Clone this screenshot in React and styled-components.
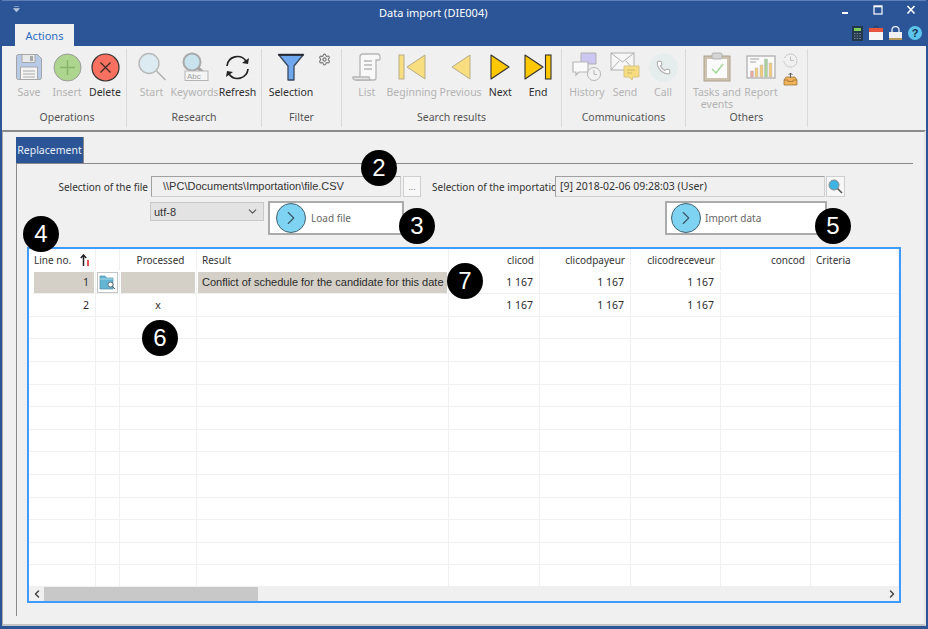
import React from 'react';
import styled, { createGlobalStyle } from 'styled-components';
import { ChevronDown, ChevronLeft, ChevronRight, Settings, Phone } from 'lucide-react';

const GlobalStyle = createGlobalStyle`
  html, body {
    margin: 0;
    padding: 0;
    background: #f0f0f0;
  }
  * {
    box-sizing: border-box;
  }
`;

const UI_FONT = '"Noto Sans", "Open Sans", sans-serif';
const DATA_FONT = '"Liberation Sans", Arial, sans-serif';

const Window = styled.div`
  position: relative;
  width: 928px;
  height: 629px;
  display: flex;
  flex-direction: column;
  overflow: hidden;
  background: #f0f0f0;
  border-left: 2px solid #2b5597;
  border-right: 2px solid #2b5597;
  border-bottom: 3px solid #2b5597;
  font-family: ${UI_FONT};
`;

const TitleBar = styled.div`
  height: 24px;
  display: flex;
  align-items: center;
  background: #2b5597;
  color: #fff;
  font-size: 11px;
  border-top: 1px solid #5d7fb5;
`;

const QuickAccess = styled.div`
  width: 377px;
  padding-left: 11px;
  display: flex;
  margin-top: -6px;
`;

const WindowControls = styled.div`
  margin-left: auto;
  padding-right: 9px;
  display: flex;
  align-items: center;
  gap: 21px;
  margin-top: -6px;
`;

const TabStrip = styled.div`
  height: 22px;
  display: flex;
  align-items: flex-end;
  justify-content: space-between;
  background: #2b5597;
  padding-left: 13px;
`;

const RibbonTab = styled.div`
  width: 59px;
  height: 22px;
  background: #f0f0f0;
  color: #2b6cc4;
  font-size: 11px;
  display: flex;
  align-items: center;
  justify-content: center;
`;

const TopIcons = styled.div`
  display: flex;
  align-items: center;
  gap: 6px;
  padding-right: 4px;
  height: 22px;
  margin-bottom: 2px;
`;

const Ribbon = styled.div`
  height: 84px;
  display: flex;
  padding: 3px 0 3px 6px;
`;

const RibbonGroup = styled.div`
  width: ${({ $width }) => $width}px;
  display: flex;
  flex-direction: column;
  border-right: 1px solid #d9d9d9;
  padding-left: ${({ $pad }) => $pad || 0}px;
`;

const GroupItems = styled.div`
  flex: 1;
  display: flex;
  align-items: flex-start;
`;

const GroupLabel = styled.div`
  height: 17px;
  text-align: center;
  font-size: 10.5px;
  line-height: 14px;
  color: #555;
  margin-left: ${({ $pad }) => ($pad ? -$pad : 0)}px;
`;

const RibbonButton = styled.div`
  width: ${({ $width }) => $width || 38}px;
  padding-top: 3px;
  display: flex;
  flex-direction: column;
  align-items: center;
  text-align: center;
  font-size: 10.5px;
  line-height: 12px;
  color: ${({ $muted }) => ($muted ? '#b3b3b3' : '#2f2f2f')};
`;

const IconSlot = styled.div`
  height: 30px;
  margin-bottom: 4px;
  display: flex;
  align-items: center;
  justify-content: center;
`;

const SideIcons = styled.div`
  width: ${({ $width }) => $width}px;
  padding-top: 4px;
  display: flex;
  flex-direction: column;
  align-items: center;
  gap: 5px;
`;

const Body = styled.div`
  flex: 1;
  min-height: 0;
  display: flex;
  flex-direction: column;
  padding: 5px 0 8px 13px;
  border-top: 2px solid #8a8a8a;
  border-left: 1px solid #a8a8a8;
  border-right: 2px solid #e4e4e4;
  border-bottom: 2px solid #c4c4c4;
`;

const PaneTab = styled.div`
  width: 68px;
  height: 26px;
  background: #2b5597;
  color: #e8eef8;
  font-size: 10.5px;
  display: flex;
  align-items: center;
  justify-content: center;
  border-right: 1px solid #8a8a8a;
`;

const Pane = styled.div`
  flex: 1;
  width: 897px;
  border-top: 1px solid #8a8a8a;
  border-left: 1px solid #8a8a8a;
  padding: 12px 0 0 10px;
  display: flex;
  flex-direction: column;
`;

const FormRow = styled.div`
  display: flex;
  align-items: ${({ $align }) => $align || 'center'};
  margin-left: -10px;
  margin-top: ${({ $top }) => $top || 0}px;
`;

const FieldLabel = styled.label`
  width: ${({ $width }) => $width}px;
  margin-left: ${({ $left }) => $left || 0}px;
  margin-right: ${({ $right }) => $right || 3}px;
  text-align: right;
  white-space: nowrap;
  font-size: 10px;
  color: #333;
`;

const ReadonlyField = styled.input`
  width: ${({ $width }) => $width}px;
  height: 21px;
  padding: 0 0 2px ${({ $pad }) => $pad}px;
  background: #f0f0f0;
  border: 1px solid #a0a0a0;
  border-right-color: #cfcfcf;
  border-bottom-color: #cfcfcf;
  outline: none;
  color: #333;
  font-family: ${({ $mono }) => ($mono ? UI_FONT : DATA_FONT)};
  font-size: ${({ $mono }) => ($mono ? 10.5 : 11)}px;
`;

const SmallButton = styled.div`
  width: ${({ $width }) => $width}px;
  height: 21px;
  margin-left: ${({ $left }) => $left}px;
  background: #f7f7f7;
  border: 1px solid #cfcfcf;
  display: flex;
  align-items: center;
  justify-content: center;
  font-size: 9px;
  color: #888;
`;

const EncodingSelect = styled.div`
  width: 114px;
  height: 19px;
  margin-left: 133px;
  margin-top: 1px;
  padding: 0 4px 0 3px;
  background: #e3e3e3;
  border: 1px solid #c8c8c8;
  display: flex;
  align-items: center;
  justify-content: space-between;
  font-family: ${DATA_FONT};
  font-size: 11px;
  color: #333;
`;

const ActionButton = styled.div`
  width: ${({ $width }) => $width}px;
  height: 34px;
  margin-left: ${({ $left }) => $left}px;
  padding-left: ${({ $pad }) => $pad}px;
  background: #fff;
  border: 2px solid #ababab;
  display: flex;
  align-items: center;
  gap: ${({ $gap }) => $gap}px;
  font-size: 10px;
  color: #666;
`;

const ArrowDisc = styled.div`
  width: 30px;
  height: 30px;
  border-radius: 50%;
  background: #7dd3f1;
  border: 1px solid #44606e;
  display: flex;
  align-items: center;
  justify-content: center;
  color: #3c5563;
`;

const DataGrid = styled.div`
  width: 874px;
  height: 356px;
  margin-top: 12px;
  display: flex;
  flex-direction: column;
  background: #fff;
  border: 2px solid #3f9bfb;
`;

const Rows = styled.div`
  flex: 1;
  min-height: 0;
  overflow: hidden;
  display: grid;
  grid-template-columns: 67px 24px 77px 252px 91px 91px 90px 90px 88px;
  grid-auto-rows: 22.6px;
  align-content: start;
`;

const HeaderCell = styled.div`
  height: 22px;
  display: flex;
  align-items: center;
  justify-content: ${({ $align }) => $align || 'flex-start'};
  padding: ${({ $align }) => ($align === 'flex-end' ? '0 5px 0 0' : '0 0 0 5px')};
  border-right: 1px solid #f0f0f0;
  font-size: 10px;
  color: #333;
  white-space: nowrap;
`;

const Cell = styled.div`
  display: flex;
  align-items: center;
  justify-content: ${({ $align }) => $align || 'flex-start'};
  padding: ${({ $align }) => ($align === 'flex-end' ? '0 6px 0 0' : $align === 'center' ? '0' : '0 0 0 5px')};
  margin-left: ${({ $inset }) => $inset || 0}px;
  background: ${({ $selected }) => ($selected ? '#d4d0c8' : '#fff')};
  border-right: 1px solid #f0f0f0;
  border-bottom: ${({ $last }) => ($last ? 'none' : '1px solid #f0f0f0')};
  box-shadow: ${({ $selected }) => ($selected ? 'inset 1px 0 0 #fff, inset -1px 0 0 #fff' : 'none')};
  font-family: ${({ $data }) => ($data ? DATA_FONT : UI_FONT)};
  font-size: ${({ $data }) => ($data ? 11 : 10.5)}px;
  color: #2a2a2a;
  white-space: nowrap;
`;

const RowButton = styled.div`
  width: 21px;
  height: 21px;
  margin: auto;
  background: #fff;
  border: 1px solid #c4c4c4;
  display: flex;
  align-items: center;
  justify-content: center;
`;

const SortMark = styled.span`
  margin-left: auto;
  margin-right: 5px;
  display: flex;
`;

const ScrollBar = styled.div`
  height: 15px;
  display: flex;
  align-items: center;
  background: #f0f0f0;
  margin-bottom: 0;
  color: #444;
`;

const ScrollArrow = styled.div`
  width: 15px;
  height: 15px;
  display: flex;
  align-items: center;
  justify-content: center;
  margin-left: ${({ $end }) => ($end ? 'auto' : 0)};
`;

const ScrollThumb = styled.div`
  width: 214px;
  height: 14px;
  background: #c8c8c8;
`;

const Badge = styled.div`
  position: absolute;
  left: ${({ $x }) => $x - 20}px;
  top: ${({ $y }) => $y - 18}px;
  width: 36px;
  height: 36px;
  border-radius: 50%;
  background: #000;
  color: #fff;
  font-family: ${DATA_FONT};
  font-size: 24px;
  display: flex;
  align-items: center;
  justify-content: center;
`;

const SaveIcon = () => (
  <svg width="28" height="28" viewBox="0 0 28 28">
    <path d="M1.5 3.5a2 2 0 0 1 2-2h19l4 4v19a2 2 0 0 1-2 2h-21a2 2 0 0 1-2-2z" fill="#b7cbe8" stroke="#a3a3a3" />
    <rect x="7" y="1.5" width="13" height="8" fill="#e9e9e9" stroke="#a8a8a8" />
    <rect x="15" y="3" width="3" height="5" fill="#a8a8a8" />
    <rect x="5.5" y="14" width="17" height="12.5" fill="#f4f4f4" stroke="#a8a8a8" />
    <path d="M8 18h12M8 21h12M8 24h12" stroke="#a8a8a8" />
  </svg>
);

const InsertIcon = () => (
  <svg width="29" height="29" viewBox="0 0 29 29">
    <circle cx="14.5" cy="14.5" r="13.5" fill="#add58f" stroke="#9b9b9b" />
    <path d="M14.5 7v15M7 14.5h15" stroke="#86b56a" strokeWidth="1.5" />
  </svg>
);

const DeleteIcon = () => (
  <svg width="29" height="29" viewBox="0 0 29 29">
    <circle cx="14.5" cy="14.5" r="13.5" fill="#f8705f" stroke="#333" strokeWidth="1.2" />
    <path d="M9.5 9.5l10 10M19.5 9.5l-10 10" stroke="#3a2a28" strokeWidth="1.2" />
  </svg>
);

const StartIcon = () => (
  <svg width="30" height="30" viewBox="0 0 30 30">
    <circle cx="12" cy="11.5" r="10" fill="#dcebf1" stroke="#b8b8b8" strokeWidth="1.4" />
    <path d="M19.5 19l9 9" stroke="#b3b3b3" strokeWidth="1.6" />
  </svg>
);

const KeywordsIcon = () => (
  <svg width="30" height="30" viewBox="0 0 30 30">
    <circle cx="12" cy="10" r="8.5" fill="#c9e3ee" stroke="#a9a9a9" strokeWidth="2" />
    <path d="M18 16l7 6" stroke="#a2a2a2" strokeWidth="3" />
    <rect x="5" y="19" width="23" height="9.5" fill="#f4f4f4" stroke="#b5b5b5" />
    <text x="7" y="27" fontSize="8" fontFamily={DATA_FONT} fill="#a0a0a0">Abc</text>
  </svg>
);

const RefreshIcon = () => (
  <svg width="27" height="27" viewBox="0 0 27 27" fill="none" stroke="#222" strokeWidth="1.7">
    <path d="M3 12a10.5 10.5 0 0 1 19-5" />
    <path d="M24 15a10.5 10.5 0 0 1-19 5" />
    <path d="M23.5 1.5v7h-7" strokeWidth="0" fill="none" />
    <path d="M25 4l-1 6-6-1z" fill="#222" stroke="none" />
    <path d="M2 23l1-6 6 1z" fill="#222" stroke="none" />
  </svg>
);

const FunnelIcon = () => (
  <svg width="28" height="28" viewBox="0 0 28 28">
    <path d="M1.5 1.5h25L17 13v14h-6V13z" fill="#6fa8ee" stroke="#39485c" strokeWidth="1.3" strokeLinejoin="round" />
    <path d="M1.5 2h25" stroke="#222" strokeWidth="1.6" />
  </svg>
);

const ListIcon = () => (
  <svg width="29" height="29" viewBox="0 0 29 29" fill="none" stroke="#b5b5b5" strokeWidth="1.3">
    <path d="M8 24V4a3 3 0 0 1 3-3h15a2.5 2.5 0 0 1 2 2.5V6a1.5 1.5 0 0 1-2 1h-2v18a2 2 0 0 1-2 2H4" fill="#f8f8f8" />
    <path d="M1 24a2.5 2.5 0 0 0 3 3h15a3 3 0 0 1-2-3z" fill="#e4e4e4" />
    <path d="M12 8h8M12 12h8M12 16h8" />
  </svg>
);

const BeginningIcon = () => (
  <svg width="28" height="26" viewBox="0 0 28 26">
    <rect x="1" y="1" width="5" height="24" fill="#f9de80" stroke="#b5ab8a" />
    <path d="M9 13L27 1v24z" fill="#f9de80" stroke="#b5ab8a" strokeLinejoin="round" />
  </svg>
);

const PreviousIcon = () => (
  <svg width="20" height="26" viewBox="0 0 20 26">
    <path d="M1 13L19 1v24z" fill="#f9de80" stroke="#b5ab8a" strokeLinejoin="round" />
  </svg>
);

const NextIcon = () => (
  <svg width="20" height="26" viewBox="0 0 20 26">
    <path d="M19 13L1 1v24z" fill="#ffc800" stroke="#333" strokeWidth="1.1" strokeLinejoin="round" />
  </svg>
);

const EndIcon = () => (
  <svg width="28" height="26" viewBox="0 0 28 26">
    <path d="M19 13L1 1v24z" fill="#ffc800" stroke="#333" strokeWidth="1.1" strokeLinejoin="round" />
    <rect x="21.5" y="1" width="5.5" height="24" fill="#ffc800" stroke="#333" strokeWidth="1.1" />
  </svg>
);

const HistoryIcon = () => (
  <svg width="30" height="30" viewBox="0 0 30 30">
    <path d="M9 1h15v11h-9l-2 2v-2H9z" fill="#ccc6f2" stroke="#b1b1b1" />
    <path d="M1 10h15v10H7l-3 3v-3H1z" fill="#fafafa" stroke="#b5b5b5" strokeWidth="1.2" />
    <circle cx="22" cy="22" r="6.5" fill="#f3f3f3" stroke="#b5b5b5" />
    <path d="M22 18v4.5h3" fill="none" stroke="#b5b5b5" />
  </svg>
);

const SendIcon = () => (
  <svg width="30" height="30" viewBox="0 0 30 30">
    <rect x="1" y="1" width="23" height="17" fill="#f6f6f6" stroke="#b0b0b0" />
    <path d="M1 1l11.5 9L24 1M1 18l8-9M24 18l-8-9" fill="none" stroke="#b0b0b0" />
    <path d="M14 14h15v11h-6l-1 3-3-3h-5z" fill="#f8dc80" stroke="#d6c589" />
    <path d="M17 18h8M17 21h5" stroke="#c9b86f" />
  </svg>
);

const TasksIcon = () => (
  <svg width="28" height="30" viewBox="0 0 28 30">
    <rect x="1" y="4" width="26" height="25" fill="#cfc2ae" stroke="#aaa292" />
    <rect x="4" y="7" width="20" height="19" fill="#fbfbfb" />
    <rect x="9" y="1" width="10" height="6" rx="1.5" fill="#d4d4d4" stroke="#b0b0b0" />
    <path d="M9 17l4 4 7-9" fill="none" stroke="#9ed695" strokeWidth="1.4" />
  </svg>
);

const ReportIcon = () => (
  <svg width="30" height="25" viewBox="0 0 30 25">
    <rect x="1" y="1" width="28" height="22" fill="#fafafa" stroke="#b0b0b0" strokeWidth="1.3" />
    <path d="M4 4h9M4 7h6" stroke="#c0c0c0" strokeWidth="1.4" />
    <rect x="4.5" y="16" width="3" height="6" fill="#e8a6a0" stroke="#b5b5b5" strokeWidth=".4" />
    <rect x="9" y="13" width="3" height="9" fill="#f2cb80" stroke="#b5b5b5" strokeWidth=".4" />
    <rect x="14" y="10" width="3" height="12" fill="#f2cb80" stroke="#b5b5b5" strokeWidth=".4" />
    <rect x="18.5" y="4" width="3" height="18" fill="#a9d29a" stroke="#b5b5b5" strokeWidth=".4" />
    <rect x="23" y="8" width="3" height="14" fill="#f2cb80" stroke="#b5b5b5" strokeWidth=".4" />
  </svg>
);

const SmallClockIcon = () => (
  <svg width="15" height="15" viewBox="0 0 15 15" fill="none" stroke="#bdbdbd">
    <path d="M1.5 5a6.5 6.5 0 1 1-.5 3" strokeDasharray="2 .6" />
    <path d="M7.5 3.5v4h3" />
  </svg>
);

const TrayIcon = () => (
  <svg width="15" height="13" viewBox="0 0 15 13">
    <path d="M1 7l2-3h9l2 3v5H1z" fill="#f2b257" stroke="#8f6a35" strokeWidth=".7" />
    <path d="M7.5 0v5M5.5 2l2-2 2 2" fill="none" stroke="#5f5f5f" />
    <path d="M1 7h4v1.5h5V7h4" fill="none" stroke="#8f6a35" strokeWidth=".7" />
  </svg>
);

const CalculatorIcon = () => (
  <svg width="11" height="15" viewBox="0 0 11 15">
    <rect width="11" height="15" fill="#24384c" />
    <rect x="2" y="2" width="7" height="3" fill="#7fcf5a" />
    <path d="M2 7.5h7M2 10h7M2 12.5h7" stroke="#7d8b99" strokeDasharray="1.5 1.2" />
  </svg>
);

const CalendarIcon = () => (
  <svg width="14" height="14" viewBox="0 0 14 14">
    <rect y="2" width="14" height="4" fill="#e9553f" />
    <rect y="6" width="14" height="8" fill="#f6f6f6" />
    <path d="M5 2a2 2 0 0 1 4 0" fill="none" stroke="#24384c" />
  </svg>
);

const LockIcon = () => (
  <svg width="13" height="14" viewBox="0 0 13 14">
    <path d="M3 7V4a3.5 3.5 0 0 1 7 0v3" fill="none" stroke="#e4e8ee" strokeWidth="1.4" />
    <rect y="6" width="13" height="6" fill="#eef0f2" />
    <rect y="12" width="13" height="2" fill="#b89a5a" />
  </svg>
);

const HelpIcon = () => (
  <svg width="14" height="14" viewBox="0 0 14 14">
    <circle cx="7" cy="7" r="7" fill="#5cc4ec" />
    <text x="7" y="11" textAnchor="middle" fontSize="11" fontWeight="700" fontFamily={DATA_FONT} fill="#17304f">?</text>
  </svg>
);

const QuickIcon = () => (
  <svg width="7" height="7" viewBox="0 0 7 7">
    <path d="M1 .5h5M.5 2.5h6L3.5 6z" fill="#b8c6dc" stroke="#b8c6dc" strokeWidth=".6" />
  </svg>
);

const SearchMiniIcon = () => (
  <svg width="15" height="15" viewBox="0 0 15 15">
    <circle cx="6" cy="6" r="5" fill="#3db4e4" stroke="#8a8a8a" />
    <path d="M9.5 9.5l4.5 4.5" stroke="#555" strokeWidth="1.6" />
  </svg>
);

const FolderSearchIcon = () => (
  <svg width="17" height="16" viewBox="0 0 17 16">
    <path d="M1 2h5l1.500 2H14v11H1z" fill="#64b5d3" stroke="#4f8aa3" strokeWidth=".7" />
    <path d="M1 5h13" stroke="#a5d8ea" />
    <circle cx="11.500" cy="10.500" r="2.500" fill="#fff" stroke="#555" strokeWidth=".8" />
    <path d="M13.300 12.300L16 15" stroke="#555" />
  </svg>
);

const SortIcon = () => (
  <svg width="10" height="12" viewBox="0 0 10 12">
    <path d="M3.500 12V1M.8 4l2.700-3 2.700 3" fill="none" stroke="#222" strokeWidth="1.500" />
    <path d="M8 6v6" stroke="#e01818" strokeWidth="1.500" />
  </svg>
);

const WindowButtons = () => (
  <WindowControls>
    <svg width="12" height="10" viewBox="0 0 12 10"><path d="M3 8h6" stroke="#fff" strokeWidth="2" /></svg>
    <svg width="12" height="10" viewBox="0 0 12 10"><rect x="2" y="1" width="8" height="8" fill="none" stroke="#fff" strokeWidth="1.200" /><path d="M2 1.500h8" stroke="#fff" strokeWidth="1.600" /></svg>
    <svg width="12" height="10" viewBox="0 0 12 10"><path d="M2.500 1l7 7.500M9.500 1l-7 7.500" stroke="#fff" strokeWidth="1.600" /></svg>
  </WindowControls>
);

const groups = [
  {
    title: 'Operations',
    width: 119,
    pad: 2,
    items: [
      { label: 'Save', icon: <SaveIcon />, muted: true },
      { label: 'Insert', icon: <InsertIcon />, muted: true },
      { label: 'Delete', icon: <DeleteIcon /> },
    ],
  },
  {
    title: 'Research',
    width: 135,
    pad: 3,
    items: [
      { label: 'Start', icon: <StartIcon />, muted: true, width: 43 },
      { label: 'Keywords', icon: <KeywordsIcon />, muted: true, width: 43 },
      { label: 'Refresh', icon: <RefreshIcon />, width: 43 },
    ],
  },
  {
    title: 'Filter',
    width: 80,
    pad: 4,
    items: [{ label: 'Selection', icon: <FunnelIcon />, width: 50 }],
    side: { width: 16, icons: [<Settings key="gear" size={13} color="#777" />] },
  },
  {
    title: 'Search results',
    width: 220,
    pad: 4,
    items: [
      { label: 'List', icon: <ListIcon />, muted: true, width: 42 },
      { label: 'Beginning', icon: <BeginningIcon />, muted: true, width: 48 },
      { label: 'Previous', icon: <PreviousIcon />, muted: true, width: 50 },
      { label: 'Next', icon: <NextIcon />, width: 30 },
      { label: 'End', icon: <EndIcon />, width: 46 },
    ],
  },
  {
    title: 'Communications',
    width: 124,
    pad: 6,
    items: [
      { label: 'History', icon: <HistoryIcon />, muted: true },
      { label: 'Send', icon: <SendIcon />, muted: true },
      { label: 'Call', icon: <CallIcon />, muted: true },
    ],
  },
  {
    title: 'Others',
    width: 122,
    pad: 6,
    items: [
      { label: 'Tasks and events', icon: <TasksIcon />, muted: true, width: 50 },
      { label: 'Report', icon: <ReportIcon />, muted: true },
    ],
    side: { width: 20, icons: [<SmallClockIcon key="clock" />, <TrayIcon key="tray" />] },
  },
];

function CallIcon() {
  return (
    <svg width="29" height="29" viewBox="0 0 29 29">
      <circle cx="14.500" cy="14.500" r="14.500" fill="#e5eeed" />
      <g transform="translate(7 7)">
        <Phone size={15} color="#b5b5b5" fill="#fff" />
      </g>
    </svg>
  );
}

const headers = [
  { label: 'Line no.', sort: true },
  { label: '' },
  { label: 'Processed', align: 'center' },
  { label: 'Result' },
  { label: 'clicod', align: 'flex-end' },
  { label: 'clicodpayeur', align: 'flex-end' },
  { label: 'clicodreceveur', align: 'flex-end' },
  { label: 'concod', align: 'flex-end' },
  { label: 'Criteria' },
];

const rows = [
  { line: '1', selected: true, processed: '', result: 'Conflict of schedule for the candidate for this date', cod: '1 167' },
  { line: '2', processed: 'x', result: '', cod: '1 167' },
  ...Array.from({ length: 12 }, () => ({ line: '', processed: '', result: '', cod: '' })),
];

const badges = [
  { n: 2, x: 379, y: 168 },
  { n: 3, x: 417, y: 226 },
  { n: 4, x: 41, y: 234 },
  { n: 5, x: 833, y: 226 },
  { n: 6, x: 160, y: 338 },
  { n: 7, x: 465, y: 281 },
];

const App = () => (
  <>
    <GlobalStyle />
    <Window>
      <TitleBar>
        <QuickAccess>
          <QuickIcon />
        </QuickAccess>
        <span>Data import (DIE004)</span>
        <WindowButtons />
      </TitleBar>
      <TabStrip>
        <RibbonTab>Actions</RibbonTab>
        <TopIcons>
          <CalculatorIcon />
          <CalendarIcon />
          <LockIcon />
          <HelpIcon />
        </TopIcons>
      </TabStrip>
      <Ribbon>
        {groups.map((group) => (
          <RibbonGroup key={group.title} $width={group.width} $pad={group.pad}>
            <GroupItems>
              {group.items.map((item) => (
                <RibbonButton key={item.label} $width={item.width} $muted={item.muted}>
                  <IconSlot>{item.icon}</IconSlot>
                  {item.label}
                </RibbonButton>
              ))}
              {group.side && <SideIcons $width={group.side.width}>{group.side.icons}</SideIcons>}
            </GroupItems>
            <GroupLabel $pad={group.pad}>{group.title}</GroupLabel>
          </RibbonGroup>
        ))}
      </Ribbon>
      <Body>
        <PaneTab>Replacement</PaneTab>
        <Pane>
          <FormRow>
            <FieldLabel $width={131}>Selection of the file</FieldLabel>
            <ReadonlyField readOnly $width={250} $pad={11} value="\\PC\Documents\Importation\file.CSV" />
            <SmallButton $width={18} $left={2}>...</SmallButton>
            <FieldLabel $width={120} $left={11}>Selection of the importation</FieldLabel>
            <ReadonlyField readOnly $mono $width={270} $pad={4} value="[9] 2018-02-06 09:28:03 (User)" />
            <SmallButton $width={19} $left={1}><SearchMiniIcon /></SmallButton>
          </FormRow>
          <FormRow $top={4} $align="flex-start">
            <EncodingSelect>
              utf-8
              <ChevronDown size={13} color="#555" />
            </EncodingSelect>
            <ActionButton $width={136} $left={4} $pad={6} $gap={5}>
              <ArrowDisc><ChevronRight size={22} strokeWidth={1.2} /></ArrowDisc>
              Load file
            </ActionButton>
            <ActionButton $width={162} $left={261} $pad={4} $gap={4}>
              <ArrowDisc><ChevronRight size={22} strokeWidth={1.2} /></ArrowDisc>
              Import data
            </ActionButton>
          </FormRow>
          <DataGrid>
            <Rows>
              {headers.map((h, i) => (
                <HeaderCell key={i} $align={h.align}>
                  {h.label}
                  {h.sort && <SortMark><SortIcon /></SortMark>}
                </HeaderCell>
              ))}
              {rows.map((row, i) => {
                const last = i === rows.length - 1;
                return (
                  <React.Fragment key={i}>
                    <Cell $data={false} $align="flex-end" $selected={row.selected} $inset={row.selected ? 4 : 0} $last={last}>{row.line}</Cell>
                    <Cell $align="center" $last={last}>
                      {row.selected && <RowButton><FolderSearchIcon /></RowButton>}
                    </Cell>
                    <Cell $align="center" $selected={row.selected} $last={last}>{row.processed}</Cell>
                    <Cell $data $selected={row.selected} $last={last}>{row.result}</Cell>
                    <Cell $align="flex-end" $last={last}>{row.cod}</Cell>
                    <Cell $align="flex-end" $last={last}>{row.cod}</Cell>
                    <Cell $align="flex-end" $last={last}>{row.cod}</Cell>
                    <Cell $last={last} />
                    <Cell $last={last} />
                  </React.Fragment>
                );
              })}
            </Rows>
            <ScrollBar>
              <ScrollArrow><ChevronLeft size={12} strokeWidth={3} /></ScrollArrow>
              <ScrollThumb />
              <ScrollArrow $end><ChevronRight size={12} strokeWidth={3} /></ScrollArrow>
            </ScrollBar>
          </DataGrid>
        </Pane>
      </Body>
      {badges.map((b) => (
        <Badge key={b.n} $x={b.x} $y={b.y}>{b.n}</Badge>
      ))}
    </Window>
  </>
);

export default App;
